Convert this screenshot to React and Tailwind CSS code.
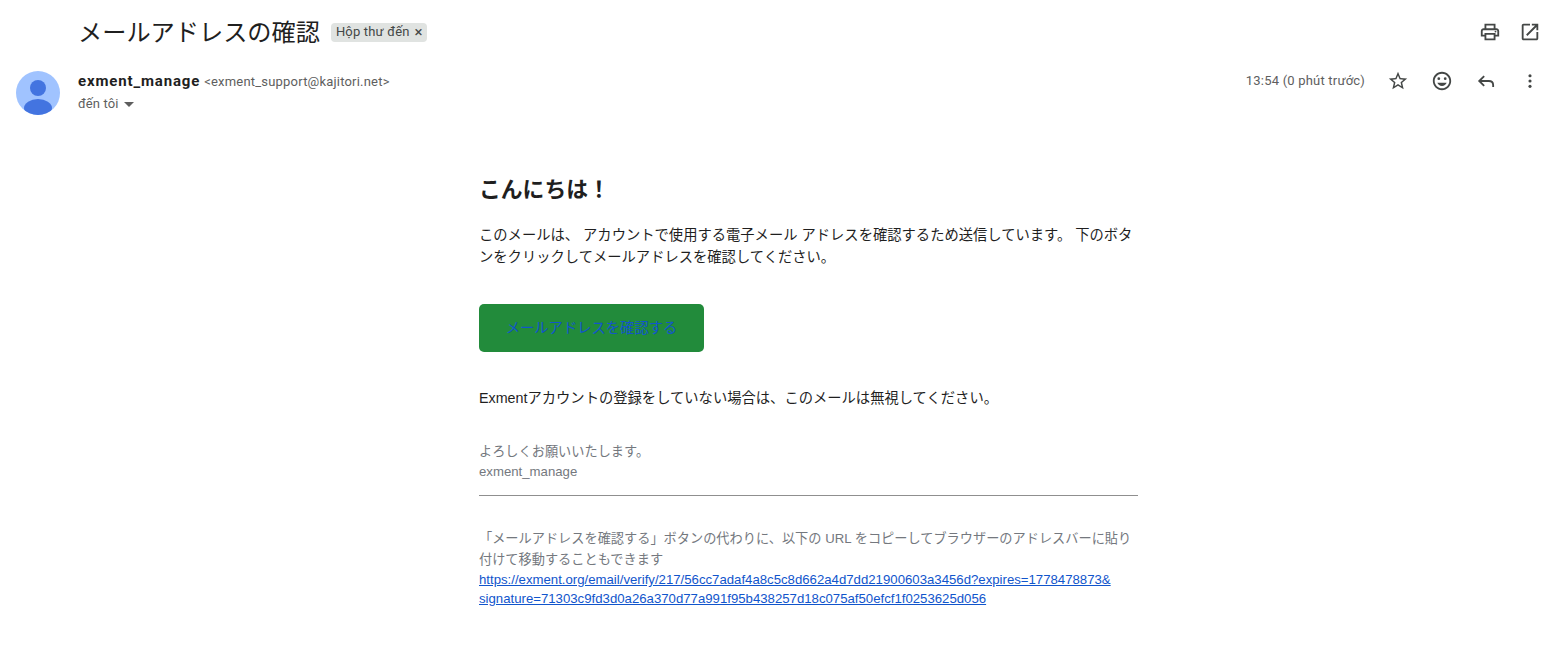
const Icon = ({ children, className = "" }) => (
  <svg viewBox="0 0 24 24" className={`w-[22px] h-[22px] fill-[#444746] ${className}`}>{children}</svg>
);

const cjk = "font-['Liberation_Sans','Noto_Sans_CJK_JP',sans-serif]";
const rob = "font-['Roboto','Noto_Sans_CJK_JP',sans-serif]";

export default function App() {
  return (
    <div className={`w-[1550px] h-[657px] overflow-hidden bg-white ${rob}`}>
      <div className="flex items-center justify-between h-[64px] pl-[78px] pr-[9px]">
        <div className="flex items-center">
          <h1 className="text-[24.2px] leading-[28px] font-normal text-[#1f1f1f] translate-y-[1px]">メールアドレスの確認</h1>
          <span className="ml-[11px] flex items-center h-[19px] rounded-[4px] bg-[#e0e3e1] pl-[5px] pr-[4px] text-[13px] tracking-[0.18px] text-[#444746]">
            Hộp thư đến
            <span className="ml-[5px] text-[15px] leading-none">×</span>
          </span>
        </div>
        <div className="flex items-center gap-[18px]">
          <Icon>
            <path d="M19 8h-1V3H6v5H5c-1.66 0-3 1.34-3 3v6h4v4h12v-4h4v-6c0-1.66-1.34-3-3-3zM8 5h8v3H8V5zm8 12v2H8v-4h8v2zm2-2v-2H6v2H4v-4c0-.55.45-1 1-1h14c.55 0 1 .45 1 1v4h-2z" />
            <circle cx="18" cy="11.5" r="1" />
          </Icon>
          <Icon>
            <path d="M19 19H5V5h7V3H5c-1.11 0-2 .9-2 2v14c0 1.1.89 2 2 2h14c1.1 0 2-.9 2-2v-7h-2v7zM14 3v2h3.59l-9.83 9.83 1.41 1.41L19 6.41V10h2V3h-7z" />
          </Icon>
        </div>
      </div>

      <div className="flex items-start h-[51px] pl-[16px] pr-[9px]">
        <svg viewBox="0 0 44 44" className="w-[44px] h-[44px] mt-[7px] shrink-0">
          <defs>
            <clipPath id="av"><circle cx="22" cy="22" r="22" /></clipPath>
          </defs>
          <g clipPath="url(#av)">
            <rect width="44" height="44" fill="#a0c3ff" />
            <circle cx="22" cy="17" r="8" fill="#4374e0" />
            <ellipse cx="22" cy="37" rx="14" ry="9" fill="#4374e0" />
          </g>
        </svg>
        <div className="ml-[18px] mt-[7px]">
          <div className="flex items-baseline h-[22px]">
            <span className="text-[15px] leading-[20px] font-bold tracking-[0.85px] text-[#1f1f1f]">exment_manage</span>
            <span className="ml-[4px] text-[13px] leading-[20px] tracking-[0.2px] text-[#5e5e5e]">&lt;exment_support@kajitori.net&gt;</span>
          </div>
          <div className="flex items-center h-[22px] text-[13px] tracking-[0.1px] text-[#5e5e5e]">
            đến tôi
            <span className="ml-[6px] w-0 h-0 border-x-[5px] border-x-transparent border-t-[5px] border-t-[#5e5e5e]" />
          </div>
        </div>
        <div className="ml-auto flex items-center gap-[22px] mt-[6px]">
          <span className="text-[13px] tracking-[0.2px] text-[#5e5e5e]">13:54 (0 phút trước)</span>
          <Icon>
            <path d="M22 9.24l-7.19-.62L12 2 9.19 8.63 2 9.24l5.46 4.73L5.82 21 12 17.27 18.18 21l-1.63-7.03L22 9.24zM12 15.4l-3.76 2.27 1-4.28-3.32-2.88 4.38-.38L12 6.1l1.71 4.04 4.38.38-3.32 2.88 1 4.28L12 15.4z" />
          </Icon>
          <Icon>
            <circle cx="15.5" cy="9.5" r="1.5" />
            <circle cx="8.5" cy="9.5" r="1.5" />
            <path d="M11.99 2C6.47 2 2 6.48 2 12s4.47 10 9.99 10C17.52 22 22 17.52 22 12S17.52 2 11.99 2zM12 20c-4.42 0-8-3.58-8-8s3.58-8 8-8 8 3.58 8 8-3.58 8-8 8zm0-2.5c2.33 0 4.31-1.46 5.11-3.5H6.89c.8 2.04 2.78 3.5 5.11 3.5z" />
          </Icon>
          <svg viewBox="0 0 24 24" className="w-[22px] h-[22px] fill-none stroke-[#444746] stroke-2">
            <path d="M10 6.6 L4.6 12 L10 17.4 M4.6 12 H15 C18 12 19.8 14 19.8 16.4 V18.5" />
          </svg>
          <Icon>
            <circle cx="12" cy="6.2" r="1.7" />
            <circle cx="12" cy="12" r="1.7" />
            <circle cx="12" cy="17.8" r="1.7" />
          </Icon>
        </div>
      </div>

      <main className={`ml-[479px] w-[659px] pt-[61px] text-[14.3px] leading-[22px] text-[#1f1f1f] ${cjk}`}>
        <h2 className="text-[21.8px] leading-[28px] font-bold text-[#1f1f1f]">こんにちは！</h2>
        <p className="mt-[20px]">このメールは、 アカウントで使用する電子メール アドレスを確認するため送信しています。 下のボタンをクリックしてメールアドレスを確認してください。</p>
        <div className="mt-[36px] flex items-center justify-center w-[225px] h-[48px] rounded-[5px] bg-[#228b3b]">
          <span className="text-[#1155cc]">メールアドレスを確認する</span>
        </div>
        <p className="mt-[35px]">Exmentアカウントの登録をしていない場合は、このメールは無視してください。</p>
        <div className="mt-[33px] text-[13.2px] leading-[20px] text-[#74787e]">
          <div>よろしくお願いいたします。</div>
          <div>exment_manage</div>
        </div>
        <hr className="mt-[13px] border-t border-[#8f8f8f]" />
        <p className="mt-[32px] text-[13.2px] leading-[21px] text-[#74787e]">「メールアドレスを確認する」ボタンの代わりに、以下の URL をコピーしてブラウザーのアドレスバーに貼り付けて移動することもできます</p>
        <a className="block text-[13.2px] leading-[19px] text-[#1155cc] underline break-all">https://exment.org/email/verify/217/56cc7adaf4a8c5c8d662a4d7dd21900603a3456d?expires=1778478873&amp;<br />signature=71303c9fd3d0a26a370d77a991f95b438257d18c075af50efcf1f0253625d056</a>
      </main>
    </div>
  );
}
